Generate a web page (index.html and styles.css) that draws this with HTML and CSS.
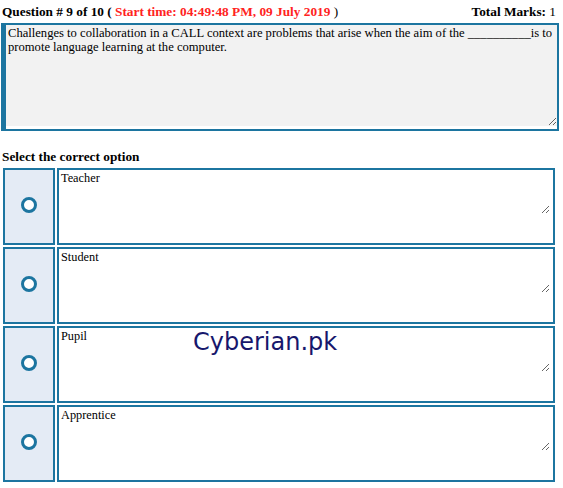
FILE: index.html
```html
<!DOCTYPE html>
<html>
<head>
<meta charset="utf-8">
<link rel="stylesheet" href="styles.css">
</head>
<body>
<div class="page">
  <div class="header">
    <div class="q-title">Question # 9 of 10 ( <span class="start">Start time: 04:49:48 PM, 09 July 2019</span> <span class="plain">)</span></div>
    <div class="marks">Total Marks: <span class="plain">1</span></div>
  </div>
  <div class="qbox">
    <textarea class="qtext" wrap="off">Challenges to collaboration in a CALL context are problems that arise when the aim of the __________is to
promote language learning at the computer.</textarea>
  </div>
  <div class="select-label">Select the correct option</div>
  <div class="options">
    <div class="radio-cell"><span class="radio"></span></div>
    <div class="answer-cell"><textarea class="answer">Teacher</textarea></div>
    <div class="radio-cell"><span class="radio"></span></div>
    <div class="answer-cell"><textarea class="answer">Student</textarea></div>
    <div class="radio-cell"><span class="radio"></span></div>
    <div class="answer-cell"><textarea class="answer">Pupil</textarea></div>
    <div class="radio-cell"><span class="radio"></span></div>
    <div class="answer-cell"><textarea class="answer">Apprentice</textarea></div>
  </div>
  <div class="watermark">Cyberian.pk</div>
</div>
</body>
</html>
```

FILE: styles.css
```css
html, body {
  margin: 0;
  padding: 0;
  background: #ffffff;
}
.page {
  position: relative;
  width: 563px;
  font-family: "Liberation Serif", "Times New Roman", serif;
  color: #000;
}
.header {
  display: flex;
  justify-content: space-between;
  align-items: baseline;
  padding: 4px 7px 0 2px;
  font-size: 13.3px;
  font-weight: bold;
  line-height: 16px;
}
.start {
  color: #ff2222;
}
.plain {
  font-weight: normal;
}
.qbox {
  margin: 3px 4px 0 1px;
  border: 2px solid #1c75a0;
  border-left-width: 5px;
  background: #ffffff;
  padding: 0 0 3px 0;
  display: flex;
}
.qtext {
  flex: 1;
  height: 101px;
  margin: 0;
  border: none;
  outline: none;
  background: #f2f2f2;
  font-family: "Liberation Serif", "Times New Roman", serif;
  font-size: 12.6px;
  line-height: 14px;
  padding: 1px 2px;
  color: #000;
  box-sizing: border-box;
  overflow: hidden;
  white-space: pre;
}
.select-label {
  font-size: 13.3px;
  font-weight: bold;
  line-height: 15px;
  padding: 18px 0 0 2px;
}
.options {
  display: grid;
  grid-template-columns: 52px 498px;
  grid-auto-rows: 77px;
  column-gap: 2px;
  row-gap: 2px;
  margin: 4px 0 0 3px;
}
.radio-cell {
  border: 2px solid #1c75a0;
  background: #e4ebf5;
  display: flex;
  align-items: center;
  justify-content: center;
  box-sizing: border-box;
}
.radio {
  width: 16px;
  height: 16px;
  box-sizing: border-box;
  border: 3.5px solid #1c75a0;
  border-radius: 50%;
  background: #ffffff;
  margin-left: -1px;
  margin-top: -3px;
}
.answer-cell {
  border: 2px solid #1c75a0;
  background: #ffffff;
  box-sizing: border-box;
  padding: 0 3px 0 0;
}
.answer {
  display: block;
  width: 100%;
  height: 44px;
  margin: 0;
  border: none;
  outline: none;
  background: #ffffff;
  font-family: "Liberation Serif", "Times New Roman", serif;
  font-size: 12.3px;
  line-height: 14px;
  padding: 1px 2px;
  color: #000;
  box-sizing: border-box;
}
.watermark {
  position: absolute;
  left: 193px;
  top: 327px;
  font-family: "DejaVu Sans", Verdana, sans-serif;
  font-size: 24px;
  line-height: 30px;
  color: #17176c;
}
```
